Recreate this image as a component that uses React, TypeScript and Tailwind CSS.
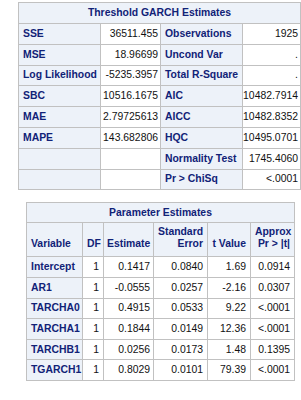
const head = "bg-[#edf2f9] text-[#112277] font-bold";
const cellB = "border border-[#c1c1c1] overflow-hidden whitespace-nowrap";

const fit: [string, string, string, string][] = [
  ["SSE", "36511.455", "Observations", "1925"],
  ["MSE", "18.96699", "Uncond Var", "."],
  ["Log Likelihood", "-5235.3957", "Total R-Square", "."],
  ["SBC", "10516.1675", "AIC", "10482.7914"],
  ["MAE", "2.79725613", "AICC", "10482.8352"],
  ["MAPE", "143.682806", "HQC", "10495.0701"],
  ["", "", "Normality Test", "1745.4060"],
  ["", "", "Pr > ChiSq", "<.0001"],
];

const params: [string, string, string, string, string, string][] = [
  ["Intercept", "1", "0.1417", "0.0840", "1.69", "0.0914"],
  ["AR1", "1", "-0.0555", "0.0257", "-2.16", "0.0307"],
  ["TARCHA0", "1", "0.4915", "0.0533", "9.22", "<.0001"],
  ["TARCHA1", "1", "0.1844", "0.0149", "12.36", "<.0001"],
  ["TARCHB1", "1", "0.0256", "0.0173", "1.48", "0.1395"],
  ["TGARCH1", "1", "0.8029", "0.0101", "79.39", "<.0001"],
];

export default function App() {
  return (
    <div className="w-[301px] h-[400px] bg-white text-[10.4px] leading-[12px] text-[#111]" style={{ fontFamily: '"Liberation Sans", Arial, sans-serif' }}>
      <div className="pt-[2px] pl-[18px]">
        <table className="border-collapse table-fixed border border-[#c1c1c1] w-[282px]">
          <colgroup>
            <col className="w-[82px]" />
            <col className="w-[60px]" />
            <col className="w-[82px]" />
            <col className="w-[58px]" />
          </colgroup>
          <thead>
            <tr className="h-[21px]">
              <th colSpan={4} className={`${cellB} ${head} text-center`}>Threshold GARCH Estimates</th>
            </tr>
          </thead>
          <tbody>
            {fit.map((r, i) => (
              <tr key={i} className="h-[20.8px]">
                <th className={`${cellB} ${head} text-left px-[4px]`}>{r[0]}</th>
                <td className={`${cellB} text-right px-[2px]`}>{r[1]}</td>
                <th className={`${cellB} ${head} text-left px-[4px]`}>{r[2]}</th>
                <td className={`${cellB} text-right pl-0 pr-[2px]`}>{r[3]}</td>
              </tr>
            ))}
          </tbody>
        </table>
      </div>
      <div className="pt-[12px] pl-[26px]">
        <table className="border-collapse table-fixed border border-[#c1c1c1] w-[268px]">
          <colgroup>
            <col className="w-[56px]" />
            <col className="w-[21px]" />
            <col className="w-[50px]" />
            <col className="w-[54px]" />
            <col className="w-[43px]" />
            <col className="w-[44px]" />
          </colgroup>
          <thead>
            <tr className="h-[20px]">
              <th colSpan={6} className={`${cellB} ${head} text-center`}>Parameter Estimates</th>
            </tr>
            <tr className="h-[34px]">
              <th className={`${cellB} ${head} text-left align-bottom px-[4px] pb-[6px]`}>Variable</th>
              <th className={`${cellB} ${head} text-right align-bottom px-[4px] pb-[6px]`}>DF</th>
              <th className={`${cellB} ${head} text-right align-bottom px-[3px] pb-[6px]`}>Estimate</th>
              <th className={`${cellB} ${head} text-right align-bottom px-[4px] pb-[6px]`}>
                Standard
                <br />
                Error
              </th>
              <th className={`${cellB} ${head} text-right align-bottom px-[4px] pb-[6px]`}>t Value</th>
              <th className={`${cellB} ${head} text-right align-bottom px-[4px] pb-[6px]`}>
                Approx
                <br />
                Pr &gt; |t|
              </th>
            </tr>
          </thead>
          <tbody>
            {params.map((r, i) => (
              <tr key={i} className="h-[20.6px]">
                <th className={`${cellB} ${head} text-left px-[4px]`}>{r[0]}</th>
                <td className={`${cellB} text-right px-[4px]`}>{r[1]}</td>
                <td className={`${cellB} text-right px-[3px]`}>{r[2]}</td>
                <td className={`${cellB} text-right px-[4px]`}>{r[3]}</td>
                <td className={`${cellB} text-right px-[4px]`}>{r[4]}</td>
                <td className={`${cellB} text-right px-[4px]`}>{r[5]}</td>
              </tr>
            ))}
          </tbody>
        </table>
      </div>
    </div>
  );
}
